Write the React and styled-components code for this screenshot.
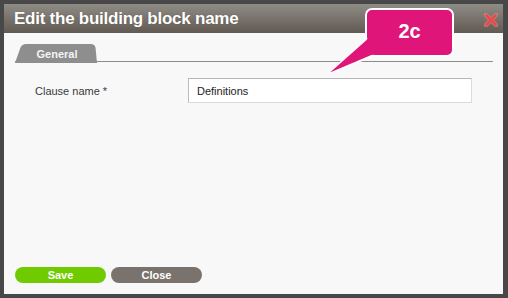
import styled, { createGlobalStyle } from 'styled-components';

const GlobalStyle = createGlobalStyle`
  html, body {
    margin: 0;
    padding: 0;
    background: #484848;
  }
  * {
    box-sizing: border-box;
  }
`
const Screen = styled.div`
  width: 508px;
  height: 298px;
  background: #484848;
  padding: 4px 5px 4px 4px;
  font-family: "Liberation Sans", Arial, sans-serif;
`
const Dialog = styled.div`
  position: relative;
  width: 100%;
  height: 100%;
  background: #f8f8f8;
  display: flex;
  flex-direction: column;
`
const Header = styled.header`
  height: 29px;
  flex: none;
  display: flex;
  align-items: center;
  justify-content: space-between;
  padding: 0 5px 0 10px;
  background: linear-gradient(to bottom, #8f8c86 0%, #7a756f 45%, #615a52 100%);
`
const Title = styled.h1`
  margin: 0;
  color: #ffffff;
  font-size: 17px;
  font-weight: bold;
  letter-spacing: -0.25px;
  text-shadow: 0 0 1px rgba(60, 50, 40, 0.5);
`
const CloseIcon = styled.svg`
  width: 14px;
  height: 14px;
  margin-top: 2px;
`
const Content = styled.div`
  flex: 1;
  padding: 11px 10px 0 11px;
`
const TabBar = styled.div`
  display: flex;
  border-bottom: 1px solid #8c8c8c;
  height: 18px;
`
const Tab = styled.div`
  position: relative;
  width: 82px;
  height: 18px;
  display: flex;
  align-items: center;
  justify-content: center;
  color: #f4f4f4;
  font-size: 11px;
  font-weight: bold;
  padding-left: 2px;
  padding-top: 1px;
`
const TabShape = styled.svg`
  position: absolute;
  left: 0;
  top: 0;
  width: 82px;
  height: 19px;
`
const TabLabel = styled.span`
  position: relative;
`
const FormRow = styled.div`
  display: flex;
  align-items: center;
  margin-top: 16px;
  padding-left: 20px;
`
const Label = styled.label`
  width: 153px;
  color: #3a3a3a;
  font-size: 11px;
`
const Input = styled.div`
  width: 284px;
  height: 25px;
  background: #ffffff;
  border: 1px solid #dcdcdc;
  border-top-color: #b5b5b5;
  border-left-color: #bdbdbd;
  display: flex;
  align-items: center;
  padding-left: 8px;
  font-size: 11px;
  color: #222;
`
const Footer = styled.div`
  display: flex;
  gap: 5px;
  padding: 0 0 11px 11px;
`
const Button = styled.button`
  width: 91px;
  height: 16px;
  border: none;
  border-radius: 8px;
  background: ${p => p.$color};
  color: #ffffff;
  font-family: "Liberation Sans", Arial, sans-serif;
  font-size: 11px;
  font-weight: bold;
  padding: 0;
  line-height: 16px;
`
const Callout = styled.div`
  position: absolute;
  left: 361px;
  top: 4px;
  width: 89px;
  height: 49px;
`
const CalloutBox = styled.div`
  width: 100%;
  height: 100%;
  background: #e0157a;
  border: 2px solid #ffffff;
  border-radius: 7px;
  display: flex;
  align-items: center;
  justify-content: center;
  color: #ffffff;
  font-size: 20px;
  font-weight: bold;
  padding-bottom: 2px;
`
const Pointer = styled.svg`
  position: absolute;
  left: -40px;
  top: 25px;
  width: 55px;
  height: 45px;
  overflow: visible;
`

const App = () => {
  return (
    <Screen>
      <GlobalStyle />
      <Dialog>
        <Header>
          <Title>Edit the building block name</Title>
          <CloseIcon viewBox="0 0 14 14">
            <path d="M2 2 L12 12 M12 2 L2 12" stroke="#ff8a8a" strokeWidth="4.5" strokeLinecap="round" opacity="0.5" />
            <path d="M2.5 2.5 L11.5 11.5 M11.5 2.5 L2.5 11.5" stroke="#f04848" strokeWidth="2.6" strokeLinecap="round" />
          </CloseIcon>
        </Header>
        <Content>
          <TabBar>
            <Tab>
              <TabShape viewBox="0 0 82 19">
                <path d="M0 19 L5.5 3.5 Q7 0 11 0 L76 0 Q79.5 0 80.5 3.5 L82 19 Z" fill="#8e8e8e" />
              </TabShape>
              <TabLabel>General</TabLabel>
            </Tab>
          </TabBar>
          <FormRow>
            <Label>Clause name *</Label>
            <Input>Definitions</Input>
          </FormRow>
        </Content>
        <Footer>
          <Button $color="#6fcb00">Save</Button>
          <Button $color="#7a736d">Close</Button>
        </Footer>
        <Callout>
          <CalloutBox>2c</CalloutBox>
          <Pointer viewBox="-40 25 55 45">
            <polyline points="2,30 -35,64.5 9,47.5" fill="none" stroke="#ffffff" strokeWidth="2" strokeLinejoin="round" />
            <polygon points="5,29 -35,64.5 11,45" fill="#e0157a" />
          </Pointer>
        </Callout>
      </Dialog>
    </Screen>
  );
}

export default App
